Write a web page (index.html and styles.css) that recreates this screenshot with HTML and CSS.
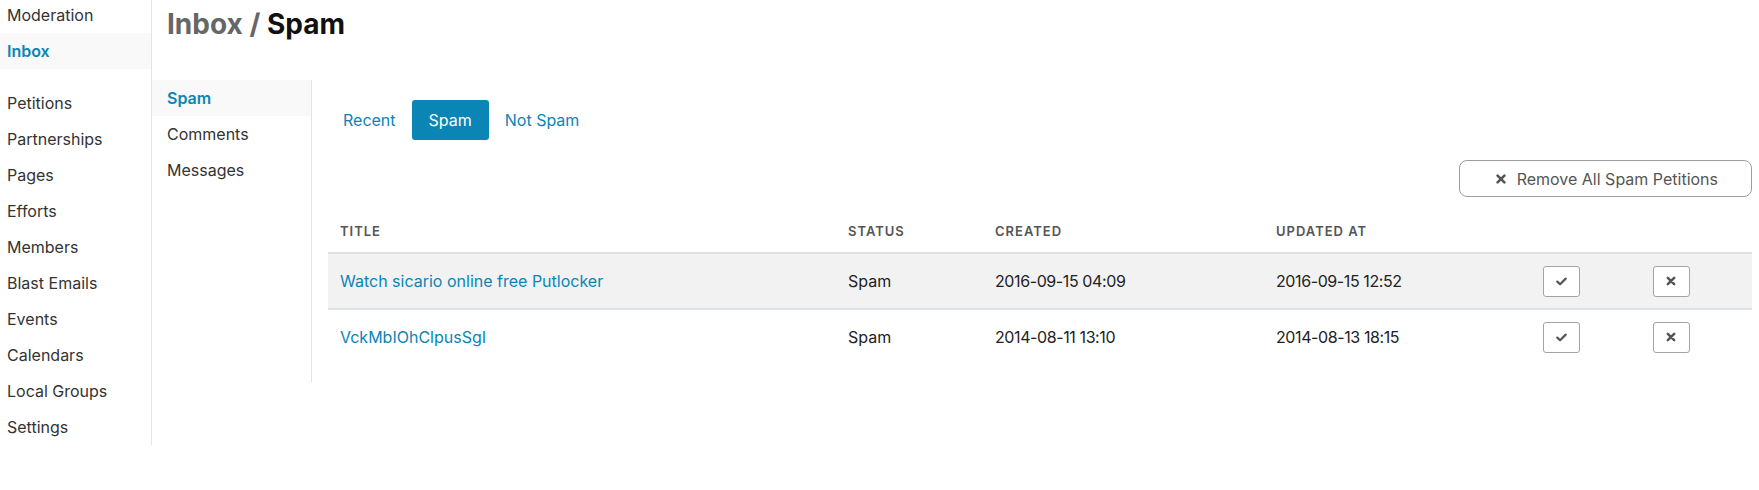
FILE: index.html
```html
<!DOCTYPE html>
<html lang="en">
<head>
<meta charset="utf-8">
<title>Inbox / Spam</title>
<link rel="stylesheet" href="styles.css">
</head>
<body>
<div class="app">
  <nav class="sidebar">
    <a class="side-item">Moderation</a>
    <a class="side-item is-active">Inbox</a>
    <div class="side-group">
      <a class="side-item">Petitions</a>
      <a class="side-item">Partnerships</a>
      <a class="side-item">Pages</a>
      <a class="side-item">Efforts</a>
      <a class="side-item">Members</a>
      <a class="side-item">Blast Emails</a>
      <a class="side-item">Events</a>
      <a class="side-item">Calendars</a>
      <a class="side-item">Local Groups</a>
      <a class="side-item">Settings</a>
    </div>
  </nav>
  <main class="main">
    <h1 class="page-title"><span class="crumb">Inbox</span> <span class="crumb">/</span> Spam</h1>
    <div class="body">
      <nav class="subnav">
        <a class="sub-item is-active">Spam</a>
        <a class="sub-item">Comments</a>
        <a class="sub-item">Messages</a>
      </nav>
      <section class="content">
        <div class="tabs">
          <a class="tab">Recent</a>
          <a class="tab is-active">Spam</a>
          <a class="tab">Not Spam</a>
        </div>
        <div class="toolbar">
          <button class="remove-btn" type="button">
            <svg class="icon-x" width="10" height="10" viewBox="0 0 10 10" aria-hidden="true"><path d="M1.6 1.6 L8.4 8.4 M8.4 1.6 L1.6 8.4" stroke="currentColor" stroke-width="2.6" stroke-linecap="round" fill="none"/></svg>
            <span>Remove All Spam Petitions</span>
          </button>
        </div>
        <table class="grid">
          <colgroup>
            <col class="c-title"><col class="c-status"><col class="c-created"><col class="c-updated"><col class="c-act"><col class="c-act"><col>
          </colgroup>
          <thead>
            <tr>
              <th>Title</th><th>Status</th><th>Created</th><th>Updated At</th><th></th><th></th><th></th>
            </tr>
          </thead>
          <tbody>
            <tr class="is-shaded">
              <td><a class="row-link">Watch sicario online free Putlocker</a></td>
              <td>Spam</td>
              <td class="date">2016-09-15 04:09</td>
              <td class="date">2016-09-15 12:52</td>
              <td class="act"><button class="act-btn" type="button"><svg width="11" height="9" viewBox="0 0 11 9" aria-hidden="true"><path d="M1.3 4.6 L4.1 7.2 L9.7 1.6" stroke="currentColor" stroke-width="2.2" stroke-linecap="round" stroke-linejoin="round" fill="none"/></svg></button></td>
              <td class="act"><button class="act-btn" type="button"><svg width="10" height="10" viewBox="0 0 10 10" aria-hidden="true"><path d="M1.8 1.8 L8.2 8.2 M8.2 1.8 L1.8 8.2" stroke="currentColor" stroke-width="2.5" stroke-linecap="round" fill="none"/></svg></button></td>
              <td></td>
            </tr>
            <tr>
              <td><a class="row-link">VckMbIOhClpusSgI</a></td>
              <td>Spam</td>
              <td class="date">2014-08-11 13:10</td>
              <td class="date">2014-08-13 18:15</td>
              <td class="act"><button class="act-btn" type="button"><svg width="11" height="9" viewBox="0 0 11 9" aria-hidden="true"><path d="M1.3 4.6 L4.1 7.2 L9.7 1.6" stroke="currentColor" stroke-width="2.2" stroke-linecap="round" stroke-linejoin="round" fill="none"/></svg></button></td>
              <td class="act"><button class="act-btn" type="button"><svg width="10" height="10" viewBox="0 0 10 10" aria-hidden="true"><path d="M1.8 1.8 L8.2 8.2 M8.2 1.8 L1.8 8.2" stroke="currentColor" stroke-width="2.5" stroke-linecap="round" fill="none"/></svg></button></td>
              <td></td>
            </tr>
          </tbody>
        </table>
      </section>
    </div>
  </main>
</div>
</body>
</html>
```

FILE: styles.css
```css
* { box-sizing: border-box; }

html, body {
  margin: 0;
  padding: 0;
  background: #ffffff;
}

body {
  font-family: Inter, "Liberation Sans", Arial, sans-serif;
  font-size: 16px;
  color: #333333;
  overflow: hidden;
}

a { text-decoration: none; cursor: pointer; }

.app {
  display: flex;
  align-items: flex-start;
}

/* ---------- left sidebar ---------- */
.sidebar {
  width: 152px;
  flex: 0 0 152px;
  margin-top: -3px;
  border-right: 1px solid #e4e4e4;
  display: flex;
  flex-direction: column;
}

.side-group {
  margin-top: 16px;
  display: flex;
  flex-direction: column;
}

.side-item {
  display: block;
  height: 36px;
  line-height: 36px;
  padding-left: 7px;
  color: #333333;
  white-space: nowrap;
}

.side-item.is-active {
  background: #f9f9f9;
  color: #0a85b6;
  font-weight: 600;
}

/* ---------- main ---------- */
.main {
  flex: 1 1 auto;
  min-width: 0;
}

.page-title {
  margin: 4px 0 36px;
  padding-left: 15px;
  height: 40px;
  line-height: 40px;
  font-size: 28px;
  font-weight: 700;
  color: #111111;
}

.page-title .crumb {
  color: #666666;
}

.body {
  display: flex;
  align-items: flex-start;
}

.subnav {
  width: 160px;
  flex: 0 0 160px;
  min-height: 302px;
  border-right: 1px solid #e4e4e4;
  display: flex;
  flex-direction: column;
}

.sub-item {
  display: block;
  height: 36px;
  line-height: 36px;
  padding-left: 15px;
  color: #333333;
}

.sub-item.is-active {
  background: #f9f9f9;
  color: #0a85b6;
  font-weight: 600;
}

.content {
  flex: 1 1 auto;
  min-width: 0;
  padding: 20px 7px 0 16px;
}

/* ---------- tabs ---------- */
.tabs {
  display: flex;
  gap: 1px;
}

.tab {
  display: block;
  height: 40px;
  line-height: 40px;
  padding: 0 15px;
  border-radius: 3px;
  color: #0a85b6;
}

.tab.is-active {
  background: #0a85b6;
  color: #ffffff;
  padding: 0 17px;
}

/* ---------- toolbar ---------- */
.toolbar {
  display: flex;
  justify-content: flex-end;
  margin-top: 20px;
  margin-bottom: 12px;
}

.remove-btn {
  display: flex;
  align-items: center;
  gap: 11px;
  height: 37px;
  padding: 0 33px 0 36px;
  border: 1px solid #9e9e9e;
  border-radius: 8px;
  background: #ffffff;
  color: #555555;
  font-family: inherit;
  font-size: 16px;
}

.icon-x { display: block; }

/* ---------- table ---------- */
.grid {
  width: 100%;
  border-collapse: collapse;
  table-layout: fixed;
}

.c-title { width: 508px; }
.c-status { width: 147px; }
.c-created { width: 281px; }
.c-updated { width: 242px; }
.c-act { width: 110px; }

.grid th {
  height: 44px;
  padding: 0 12px;
  text-align: left;
  vertical-align: middle;
  font-size: 13px;
  font-weight: 600;
  letter-spacing: 1px;
  text-transform: uppercase;
  color: #555555;
  border-bottom: 2px solid #dde1e5;
}

.grid td {
  height: 55px;
  padding: 0 12px;
  vertical-align: middle;
  color: #222222;
  white-space: nowrap;
}

.grid tbody tr.is-shaded td {
  background: #f2f2f2;
  border-bottom: 2px solid #dde1e5;
  height: 56px;
}

.grid td.date {
  letter-spacing: -0.4px;
}

.row-link {
  color: #0a85b6;
}

.grid td.act {
  text-align: center;
  padding: 0;
}

.act-btn {
  display: inline-flex;
  align-items: center;
  justify-content: center;
  width: 37px;
  height: 31px;
  padding: 0;
  border: 1px solid #a4a4a4;
  border-radius: 3px;
  background: #ffffff;
  color: #555555;
  vertical-align: middle;
}

.act-btn svg { display: block; }
```
